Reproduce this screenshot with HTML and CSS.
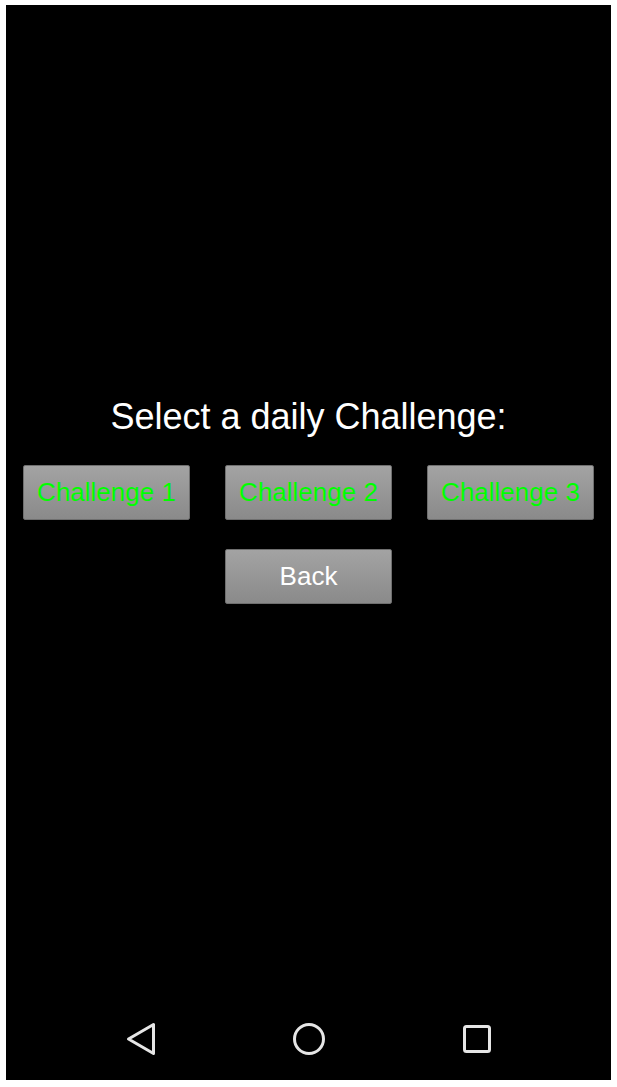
FILE: index.html
```html
<!DOCTYPE html>
<html lang="en">
<head>
<meta charset="utf-8">
<title>Daily Challenge</title>
<link rel="stylesheet" href="styles.css">
</head>
<body>
<div class="screen">
  <main class="content">
    <h1 class="title">Select a daily Challenge:</h1>
    <div class="row">
      <button class="btn btn-green">Challenge 1</button>
      <button class="btn btn-green">Challenge 2</button>
      <button class="btn btn-green">Challenge 3</button>
    </div>
    <div class="row row-center">
      <button class="btn btn-white">Back</button>
    </div>
  </main>
  <nav class="navbar">
    <span class="nav-slot">
      <svg width="40" height="40" viewBox="0 0 40 40"><polygon points="7.5,20 32.5,5.5 32.5,34.5" fill="none" stroke="#e6e6e6" stroke-width="3" stroke-linejoin="round"/></svg>
    </span>
    <span class="nav-slot">
      <svg width="40" height="40" viewBox="0 0 40 40"><circle cx="20" cy="20" r="14.5" fill="none" stroke="#e6e6e6" stroke-width="3"/></svg>
    </span>
    <span class="nav-slot">
      <svg width="40" height="40" viewBox="0 0 40 40"><rect x="7.5" y="7.5" width="25" height="25" rx="2" fill="none" stroke="#e6e6e6" stroke-width="3"/></svg>
    </span>
  </nav>
</div>
</body>
</html>
```

FILE: styles.css
```css
html, body {
  margin: 0;
  padding: 0;
  background: #ffffff;
}

body {
  font-family: "Liberation Sans", Arial, sans-serif;
}

.screen {
  margin: 5px 6px 7px 6px;
  width: 605px;
  height: 1075px;
  background: #000000;
  display: flex;
  flex-direction: column;
}

.content {
  flex: 1;
  display: flex;
  flex-direction: column;
  padding-top: 392px;
  gap: 28px;
}

.title {
  margin: 0;
  font-weight: normal;
  font-size: 36px;
  line-height: 40px;
  color: #ffffff;
  text-align: center;
}

.row {
  display: flex;
  justify-content: space-between;
  padding: 0 17px;
}

.row + .row {
  margin-top: 1px;
}

.row-center {
  justify-content: center;
}

.btn {
  width: 167px;
  height: 55px;
  padding: 0;
  border: 1px solid #6f6f6f;
  border-radius: 2px;
  background: linear-gradient(to bottom, #a3a3a3, #8a8a8a);
  font-family: "Liberation Sans", Arial, sans-serif;
  font-size: 26px;
  display: flex;
  align-items: center;
  justify-content: center;
  box-sizing: border-box;
}

.btn-green {
  color: #00ff00;
}

.btn-white {
  color: #ffffff;
}

.navbar {
  height: 82px;
  display: flex;
  align-items: center;
  justify-content: center;
  gap: 128px;
}

.nav-slot {
  width: 40px;
  height: 40px;
  display: flex;
}
```
